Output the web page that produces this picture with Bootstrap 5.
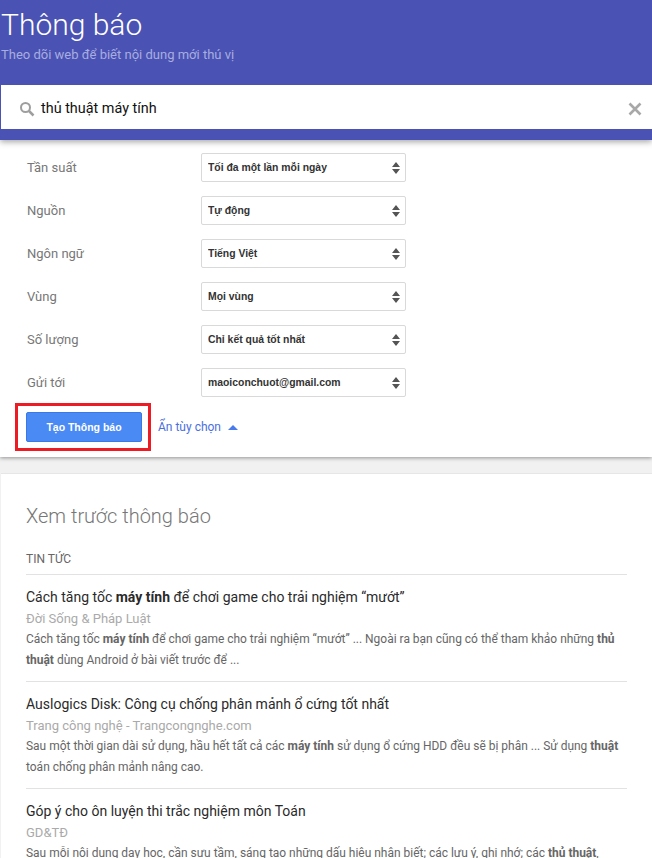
<!DOCTYPE html>
<html lang="vi"><head><meta charset="utf-8"><title>Thông báo</title>
<link href="https://cdn.jsdelivr.net/npm/bootstrap@5.3.0/dist/css/bootstrap.min.css" rel="stylesheet">
<style>
html,body{height:858px;overflow:hidden}
body{background:#f1f1f1;font-family:Roboto,"Noto Sans",sans-serif;color:#333}
.hdr{position:relative;background:#4a53b3;height:140px;padding-top:7px;box-shadow:0 2px 6px rgba(0,0,0,.35)}
.hdr-title{font-weight:300;font-size:30px;line-height:36px;color:#fff;margin:0 0 0 1px;padding:0}
.hdr-sub{font-size:13px;line-height:16px;color:#a8ade0;margin:4px 0 0 1px}
.srch{background:#fff;height:44px;margin:22px 0 0 1px;padding:3px 10px 0 18px}
.srch-text{font-size:14.4px;color:#111;margin-left:6px}
.opts{background:#fff;height:317px;padding:13px 0 0 26px;box-shadow:0 1px 4px rgba(0,0,0,.4)}
.opt-row{height:29px;margin-bottom:14px}
.opt-lbl{width:174px;margin-left:1px;font-size:13px;color:#777}
.opt-sel.form-select{width:205px;height:29px;padding:0 20px 1px 6px;font:bold 10.4px "Liberation Sans",sans-serif;color:#333;border:1px solid #d9d9d9;border-radius:2px;background-size:10px 14px;background-position:right 4px center;background-image:url("data:image/svg+xml,%3Csvg xmlns='http://www.w3.org/2000/svg' viewBox='0 0 10 14'%3E%3Cpath d='M5 1 9 6H1zM5 13 1 8h8z' fill='%23555'/%3E%3C/svg%3E")}
.act{margin:-8px 0 0 -11px}
.hilite{border:3px solid #ed1c24;padding:6px 6px 6px 8px;width:136px;height:48px}
.go.btn{width:116px;height:30px;padding:0;border:1px solid #3b78e7;border-radius:2px;background:#4a8af4;color:#fff;font:bold 10.5px/28px "Liberation Sans",sans-serif}
.tog{font-size:12px;color:#4a6fe0;margin-left:7px;text-decoration:none}
.tri{width:0;height:0;border-left:5px solid transparent;border-right:5px solid transparent;border-bottom:5px solid #4a7bec;margin-left:7px}
.prev{background:#fff;margin:16px 0 0 1px;padding:29px 25px 0 25px;border-top:1px solid #e6e6e6;height:400px}
.prev-h{font-weight:300;font-size:20px;line-height:26px;color:#777;margin:0}
.sect{font-size:12px;line-height:16px;color:#666;margin:22px 0 0;padding-bottom:7px;border-bottom:1px solid #e2e2e2}
.itm{padding:12px 0 11px;border-bottom:1px solid #e2e2e2}
.itm-t{font-size:14px;line-height:20px;color:#2a2a2a}
.itm-s{font-size:13px;line-height:20px;color:#aaa;margin-top:2px}
.itm-d{font-size:11.97px;line-height:20.5px;color:#666;margin-top:0}
</style></head><body>
<header class="hdr">
<h1 class="hdr-title">Thông báo</h1>
<p class="hdr-sub">Theo dõi web để biết nội dung mới thú vị</p>
<div class="srch d-flex align-items-center">
<svg width="16" height="16" viewBox="0 0 16 16" fill="none" stroke="#9e9e9e"><circle cx="6.5" cy="6.5" r="4.5" stroke-width="2"/><path d="M10 10l4.5 4.5" stroke-width="2.5"/></svg>
<span class="srch-text">thủ thuật máy tính</span>
<svg class="ms-auto" width="14" height="14" viewBox="0 0 14 14" stroke="#a8a8a8" stroke-width="2.6"><path d="M1.5 1.5l11 11M12.5 1.5l-11 11"/></svg>
</div>
</header>
<section class="opts">
<div class="opt-row d-flex align-items-center"><div class="opt-lbl">Tần suất</div><select class="form-select opt-sel"><option>Tối đa một lần mỗi ngày</option></select></div>
<div class="opt-row d-flex align-items-center"><div class="opt-lbl">Nguồn</div><select class="form-select opt-sel"><option>Tự động</option></select></div>
<div class="opt-row d-flex align-items-center"><div class="opt-lbl">Ngôn ngữ</div><select class="form-select opt-sel"><option>Tiếng Việt</option></select></div>
<div class="opt-row d-flex align-items-center"><div class="opt-lbl">Vùng</div><select class="form-select opt-sel"><option>Mọi vùng</option></select></div>
<div class="opt-row d-flex align-items-center"><div class="opt-lbl">Số lượng</div><select class="form-select opt-sel"><option>Chỉ kết quả tốt nhất</option></select></div>
<div class="opt-row d-flex align-items-center"><div class="opt-lbl">Gửi tới</div><select class="form-select opt-sel"><option>maoiconchuot@gmail.com</option></select></div>
<div class="act d-flex align-items-center">
<div class="hilite"><button class="btn go" type="button">Tạo Thông báo</button></div>
<a class="tog" href="#">Ẩn tùy chọn</a><span class="tri"></span>
</div>
</section>
<section class="prev">
<h2 class="prev-h">Xem trước thông báo</h2>
<div class="sect">TIN TỨC</div>
<div class="itm"><div class="itm-t">Cách tăng tốc <b>máy tính</b> để chơi game cho trải nghiệm “mướt”</div><div class="itm-s">Đời Sống &amp; Pháp Luật</div><div class="itm-d">Cách tăng tốc <b>máy tính</b> để chơi game cho trải nghiệm “mướt” ... Ngoài ra bạn cũng có thể tham khảo những <b>thủ thuật</b> dùng Android ở bài viết trước để ...</div></div>
<div class="itm"><div class="itm-t">Auslogics Disk: Công cụ chống phân mảnh ổ cứng tốt nhất</div><div class="itm-s">Trang công nghệ - Trangcongnghe.com</div><div class="itm-d">Sau một thời gian dài sử dụng, hầu hết tất cả các <b>máy tính</b> sử dụng ổ cứng HDD đều sẽ bị phân ... Sử dụng <b>thuật</b> toán chống phân mảnh nâng cao.</div></div>
<div class="itm"><div class="itm-t">Góp ý cho ôn luyện thi trắc nghiệm môn Toán</div><div class="itm-s">GD&amp;TĐ</div><div class="itm-d">Sau mỗi nội dung dạy học, cần sưu tầm, sáng tạo những dấu hiệu nhận biết; các lưu ý, ghi nhớ; các <b>thủ thuật</b>,</div></div>
</section>
</body></html>
